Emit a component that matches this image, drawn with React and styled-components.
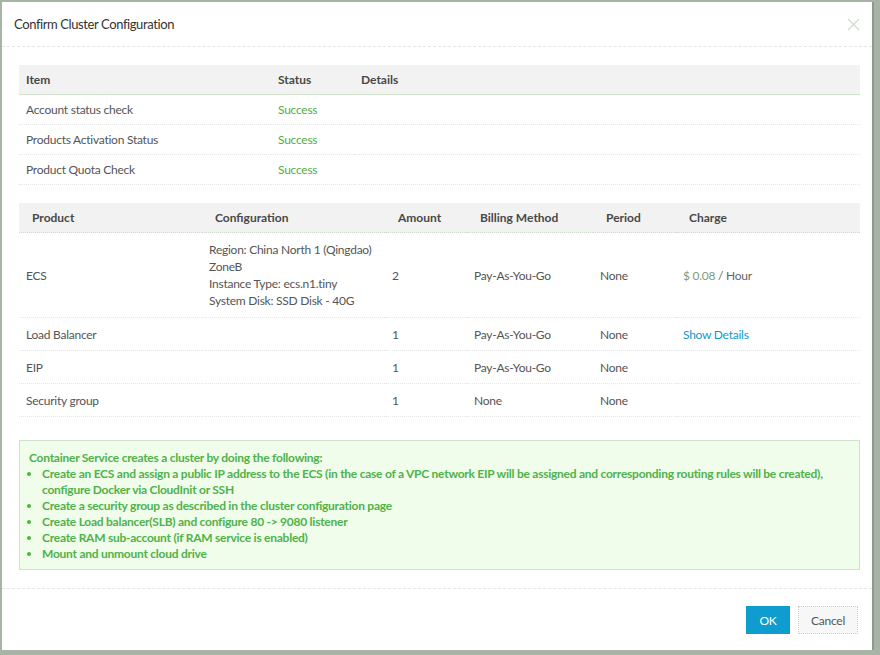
import React from 'react';
import styled, { createGlobalStyle } from 'styled-components';

const GlobalStyle = createGlobalStyle`
	html, body {
		margin: 0;
		padding: 0;
		background: #a8b4a5;
		font-family: Lato, "Liberation Sans", Arial, sans-serif;
		font-size: 12px;
		letter-spacing: -0.25px;
		color: #555;
	}
`

const Page = styled.div`
	padding: 2px 6px 5px 2px;
	height: 655px;
	box-sizing: border-box;
`

const Dialog = styled.div`
	background: #fff;
	height: 648px;
	display: flex;
	flex-direction: column;
	border-right: 2px solid #8e9a8c;
	overflow: hidden;
`

const Header = styled.div`
	height: 44px;
	display: flex;
	align-items: center;
	justify-content: space-between;
	padding: 0 12px 0 12px;
	border-bottom: 1px dashed #e6e6e6;
	flex-shrink: 0;
`

const Title = styled.h3`
	margin: 0;
	font-size: 13px;
	font-weight: normal;
	letter-spacing: -0.4px;
	color: #333;
`

const Close = styled.svg`
	width: 13px;
	height: 13px;
	stroke: #cddfca;
	stroke-width: 1.3;
	cursor: pointer;
`

const Body = styled.div`
	flex: 1;
	padding: 18px 12px 18px 17px;
	display: flex;
	flex-direction: column;
`

const Table = styled.table`
	width: 100%;
	border-collapse: collapse;
	table-layout: fixed;
	margin-bottom: ${props => props.gap || 0}px;
`

const Th = styled.th`
	background: #f2f2f2;
	text-align: left;
	font-weight: bold;
	letter-spacing: 0;
	color: #484848;
	height: 29px;
	padding: 0 7px 0 ${props => props.pad || 7}px;
	border-bottom: 1px ${props => props.line || 'solid'} ${props => props.lineColor || '#d4e3cf'};
`

const Td = styled.td`
	padding: ${props => props.tall ? '7.5px' : '0'} 7px;
	height: ${props => props.tall ? 'auto' : '29px'};
	line-height: 17px;
	vertical-align: middle;
	white-space: nowrap;
	border-bottom: 1px dotted #e6e6e6;
	color: ${props => props.color || '#555'};
`

const Line = styled.div`
	line-height: 17.3px;
`

const Price = styled.span`
	color: #7d9c79;
`

const Unit = styled.span`
	color: #666;
`

const Link = styled.a`
	color: #0a9ad0;
	text-decoration: none;
	cursor: pointer;
`

const Notice = styled.div`
	background: #f0fdeb;
	border: 1px solid #cde3c8;
	padding: 9px 9px 7px;
	color: #4fb24a;
	font-weight: bold;
	letter-spacing: -0.25px;
	line-height: 16px;
`

const Steps = styled.ul`
	margin: 0;
	padding-left: 13px;
	list-style: disc;
`

const Footer = styled.div`
	height: 62px;
	border-top: 1px dashed #e6e6e6;
	display: flex;
	align-items: center;
	justify-content: flex-end;
	gap: 8px;
	padding-right: 14px;
	flex-shrink: 0;
`

const Button = styled.button`
	height: 28px;
	padding: 0 ${props => props.primary ? 12 : 12}px;
	min-width: ${props => props.primary ? 44 : 60}px;
	font-family: inherit;
	font-size: 12px;
	letter-spacing: inherit;
	cursor: pointer;
	border: 1px ${props => props.primary ? 'solid #0f9dd0' : 'dotted #cfcfcf'};
	background: ${props => props.primary ? '#0f9dd0' : '#f7f7f7'};
	color: ${props => props.primary ? '#fff' : '#555'};
`

const checks = ['Account status check', 'Products Activation Status', 'Product Quota Check'];

const products = [
	{ name: 'ECS', config: ['Region: China North 1 (Qingdao)', 'ZoneB', 'Instance Type: ecs.n1.tiny', 'System Disk: SSD Disk - 40G'], amount: 2, billing: 'Pay-As-You-Go', period: 'None', charge: 'price' },
	{ name: 'Load Balancer', amount: 1, billing: 'Pay-As-You-Go', period: 'None', charge: 'link' },
	{ name: 'EIP', amount: 1, billing: 'Pay-As-You-Go', period: 'None' },
	{ name: 'Security group', amount: 1, billing: 'None', period: 'None' },
];

const steps = [
	'Create an ECS and assign a public IP address to the ECS (in the case of a VPC network EIP will be assigned and corresponding routing rules will be created), configure Docker via CloudInit or SSH',
	'Create a security group as described in the cluster configuration page',
	'Create Load balancer(SLB) and configure 80 -> 9080 listener',
	'Create RAM sub-account (if RAM service is enabled)',
	'Mount and unmount cloud drive',
];

function Charge({ type }){
	if (type === 'price') return <Price>$ 0.08 <Unit>/ Hour</Unit></Price>;
	if (type === 'link') return <Link>Show Details</Link>;
	return null;
}

export default function App(){
	return (
		<Page>
			<GlobalStyle />
			<Dialog>
				<Header>
					<Title>Confirm Cluster Configuration</Title>
					<Close viewBox="0 0 13 13" fill="none">
						<path d="M1 1L12 12M12 1L1 12" />
					</Close>
				</Header>
				<Body>
					<Table gap={18}>
						<colgroup>
							<col style={{ width: 252 }} />
							<col style={{ width: 83 }} />
							<col />
						</colgroup>
						<thead>
							<tr>
								<Th>Item</Th>
								<Th>Status</Th>
								<Th>Details</Th>
							</tr>
						</thead>
						<tbody>
							{checks.map(c => (
								<tr key={c}>
									<Td>{c}</Td>
									<Td color="#4fae48">Success</Td>
									<Td />
								</tr>
							))}
						</tbody>
					</Table>
					<Table gap={23}>
						<colgroup>
							<col style={{ width: 183 }} />
							<col style={{ width: 183 }} />
							<col style={{ width: 82 }} />
							<col style={{ width: 126 }} />
							<col style={{ width: 83 }} />
							<col />
						</colgroup>
						<thead>
							<tr>
								{['Product', 'Configuration', 'Amount', 'Billing Method', 'Period', 'Charge'].map(h => (
									<Th key={h} pad={13} line="dotted" lineColor="#cfdccb">{h}</Th>
								))}
							</tr>
						</thead>
						<tbody>
							{products.map(p => (
								<tr key={p.name}>
									<Td tall>{p.name}</Td>
									<Td tall>{(p.config || []).map(l => <Line key={l}>{l}</Line>)}</Td>
									<Td tall>{p.amount}</Td>
									<Td tall>{p.billing}</Td>
									<Td tall>{p.period}</Td>
									<Td tall><Charge type={p.charge} /></Td>
								</tr>
							))}
						</tbody>
					</Table>
					<Notice>
						Container Service creates a cluster by doing the following:
						<Steps>
							{steps.map(s => <li key={s}>{s}</li>)}
						</Steps>
					</Notice>
				</Body>
				<Footer>
					<Button primary>OK</Button>
					<Button>Cancel</Button>
				</Footer>
			</Dialog>
		</Page>
	);
}
